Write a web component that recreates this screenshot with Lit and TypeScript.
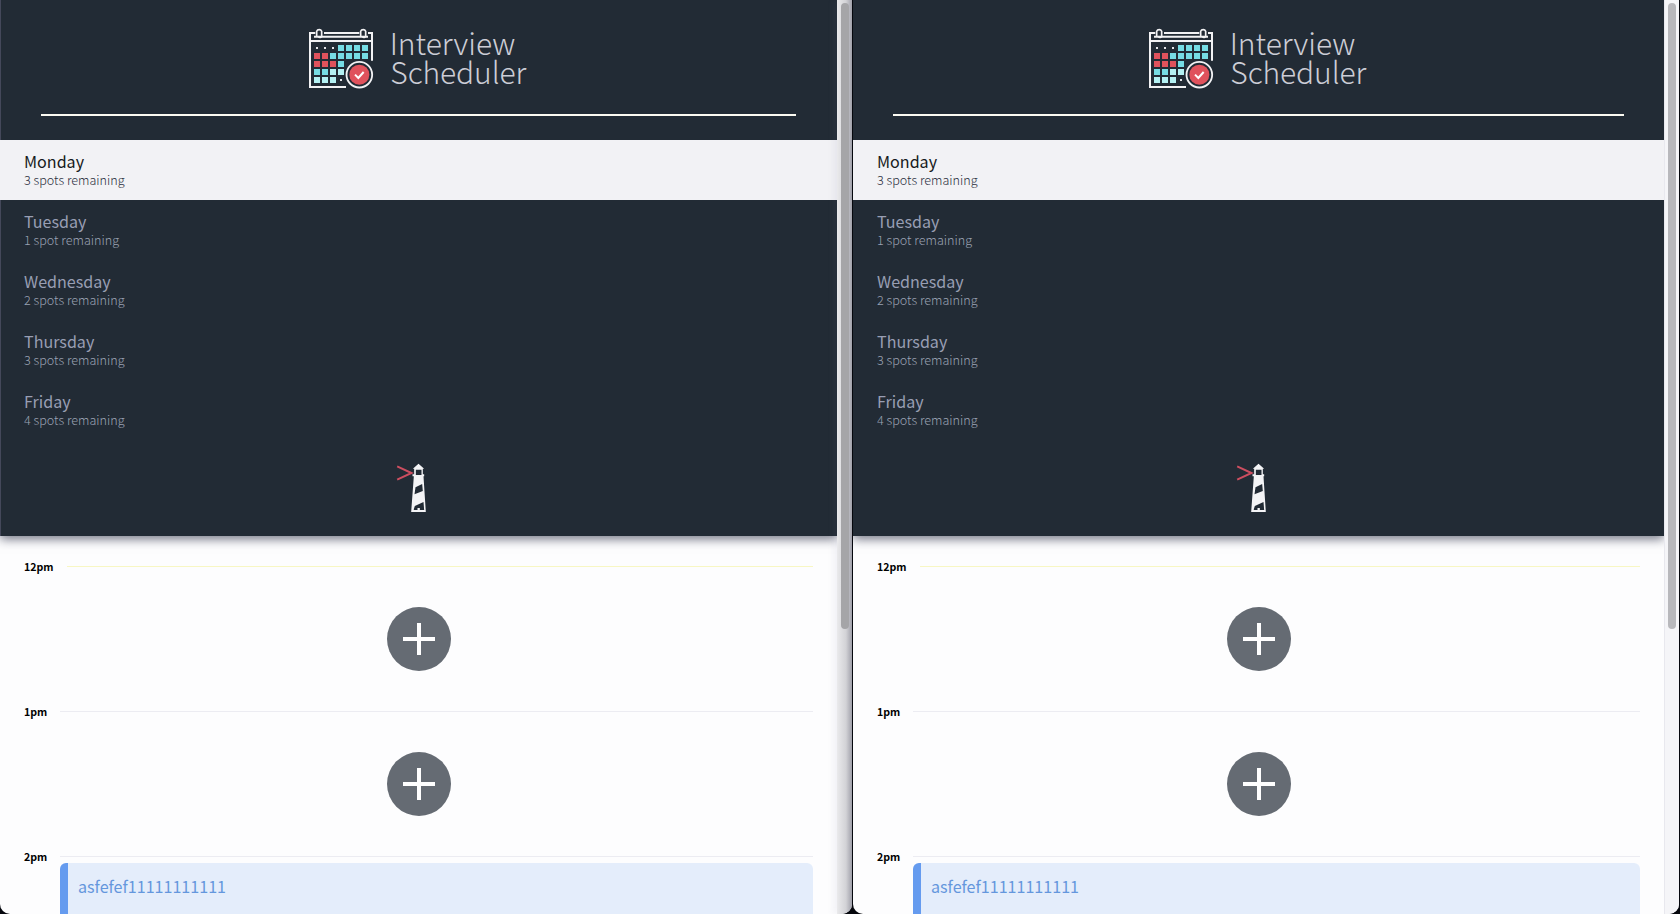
import { LitElement, html, css, svg } from "lit";
import { customElement, property } from "lit/decorators.js";

const DAYS = [
  ["Monday", "3 spots remaining"],
  ["Tuesday", "1 spot remaining"],
  ["Wednesday", "2 spots remaining"],
  ["Thursday", "3 spots remaining"],
  ["Friday", "4 spots remaining"],
];

// Calendar cells, one string per row: d = dot, r = red, c = cyan, p = pale, . = empty
const CELLS = ["dddcccc", "rrccccc", "rrrc...", "ccpp...", "pppd..."];
const FILLS: Record<string, string> = { r: "#e0525c", c: "#76dce4", p: "#b4f1f3" };

const cell = (kind: string, col: number, row: number) => {
  const x = 72 + col * 24;
  const y = 105 + row * 24;
  if (kind === ".") return null;
  if (kind === "d") return svg`<rect x=${x + 6} y=${y + 6} width="6" height="6" fill="#e4e4e8"/>`;
  return svg`<rect x=${x} y=${y} width="18" height="18" fill=${FILLS[kind]}/>`;
};

@customElement("scheduler-logo")
class SchedulerLogo extends LitElement {
  static styles = css`
    :host { display: block; height: 62px; }
    svg { display: block; overflow: visible; }
    .word { font-family: "Noto Sans CJK SC", sans-serif; font-weight: 300; font-size: 90px; fill: #cccdd6; }
  `;
  render() {
    return html`<svg width="218" height="62" viewBox="60 51 654 186">
      <g fill="none" stroke="#f2f2f4" stroke-width="6">
        <path d="M76 69H60V231H168M102 69H208M234 69H246V152M60 93H246M72 80H234"/>
        <path d="M80 78V64a8 8 0 0 1 15 0V76a5 5 0 0 1-10 2M212 78V64a8 8 0 0 1 15 0V76a5 5 0 0 1-10 2" stroke-width="5"/>
      </g>
      ${CELLS.map((row, r) => [...row].map((k, c) => cell(k, c, r)))}
      <circle cx="208" cy="194" r="45" fill="#222b35"/>
      <circle cx="208" cy="194" r="38.5" fill="#222b35" stroke="#f2f2f4" stroke-width="5.5"/>
      <circle cx="208" cy="194" r="30" fill="#e0525c"/>
      <path d="M195 194L205 204L221 186" fill="none" stroke="#fff" stroke-width="6"/>
      <text class="word" x="299" y="136" textLength="377">Interview</text>
      <text class="word" x="301" y="223" textLength="408">Scheduler</text>
    </svg>`;
  }
}

@customElement("lighthouse-mark")
class LighthouseMark extends LitElement {
  static styles = css`
    :host { display: block; }
    svg { display: block; }
  `;
  render() {
    return html`<svg width="44" height="50" viewBox="70 66 132 150">
      <path d="M81 79L124 99L81 119" fill="none" stroke="#cc4e60" stroke-width="6"/>
      <path d="M145 71L162 86H158V103H162V109H160L167 216H123L131 109H127V103H132V86H128Z" fill="#f4f4f6"/>
      <path d="M137 89H154V105H137ZM136 142L156 132L158 153L133 163ZM131 207L134 198L160 186L162 210H149V204H142V210H131Z" fill="#222b35"/>
    </svg>`;
  }
}

@customElement("scheduler-window")
class SchedulerWindow extends LitElement {
  @property({ type: Boolean, reflect: true }) behind = false;

  static styles = css`
    :host {
      display: flex; box-sizing: border-box; height: 914px; overflow: hidden;
      border-radius: 0 0 10px 10px; background: #fdfdfe;
      font-family: "Noto Sans CJK SC", sans-serif;
    }
    .page { flex: 1; min-width: 0; display: flex; flex-direction: column; }
    .sidebar {
      flex: none; box-sizing: border-box; height: 536px; background: #222b35;
      display: flex; flex-direction: column; align-items: center;
      padding-top: 27px; box-shadow: 0 3px 10px rgba(20, 25, 50, 0.6);
    }
    :host([behind]) .sidebar { box-shadow: inset 1px 0 #44485a, 0 3px 10px rgba(20, 25, 50, 0.6); }
    .rule { width: 90.2%; height: 2px; margin: 25px 0 24px; background: #fbfaf2; }
    .days { align-self: stretch; margin: 0; padding: 0; list-style: none; }
    .day { box-sizing: border-box; height: 60px; padding: 11px 24px 0; color: #989eb3; }
    .day.selected { background: #f2f2f5; color: #171a21; }
    .name { font-size: 16.1px; line-height: 20px; }
    .spots { font-size: 12.6px; line-height: 17px; font-weight: 300; color: #9ba2b3; }
    .selected .spots { color: #2c3040; }
    lighthouse-mark { margin-top: 22px; transform: translateX(-3.5px); }
    .schedule { padding: 20px 24px 0; }
    .hour { height: 145px; }
    .head { display: flex; align-items: center; height: 21px; }
    .time { font-size: 10.6px; font-weight: 700; color: #000; line-height: 20px; padding-top: 1px; }
    .line { flex: 1; height: 1px; margin-left: 13px; background: #ececf2; }
    .hour:first-child .line { background: #f8f7c4; }
    .empty { display: flex; justify-content: center; padding-top: 30px; }
    .card {
      box-sizing: border-box; height: 110px; margin: -4px 0 0 36px; padding: 11px 10px;
      border-left: 8px solid #659bef; border-radius: 6px; background: #e4edfb;
      color: #6497dd; font-size: 16.1px; line-height: 24px;
    }
    .track {
      flex: none; width: 15px; box-sizing: border-box; padding: 3px 3px 0 4px; background: #f5f5f8;
      box-shadow: inset 1px 0 #e8e8ee;
    }
    :host([behind]) .track { background: linear-gradient(90deg, #eaeaec, #d2d2d6 60%, #a0a0aa); box-shadow: -4px 0 6px rgba(120, 120, 150, 0.08); }
    .thumb { height: 626px; border-radius: 4px; background: #b8b8bc; }
    :host([behind]) .thumb { background: #a5a5a8; }
  `;

  addButton() {
    return html`<div class="empty"><svg width="64" height="64" viewBox="0 0 64 64">
      <circle cx="32" cy="32" r="32" fill="#656b73"/>
      <path d="M32 16V48M16 32H48" stroke="#fff" stroke-width="4"/>
    </svg></div>`;
  }

  render() {
    return html`
      <div class="page">
        <div class="sidebar">
          <scheduler-logo></scheduler-logo>
          <div class="rule"></div>
          <ul class="days">
            ${DAYS.map(([name, spots], i) => html`<li class="day ${i === 0 ? "selected" : ""}">
              <div class="name">${name}</div><div class="spots">${spots}</div>
            </li>`)}
          </ul>
          <lighthouse-mark></lighthouse-mark>
        </div>
        <div class="schedule">
          ${["12pm", "1pm", "2pm"].map((t) => html`<div class="hour">
            <div class="head"><span class="time">${t}</span><span class="line"></span></div>
            ${t === "2pm" ? html`<div class="card">asfefef11111111111</div>` : this.addButton()}
          </div>`)}
        </div>
      </div>
      <div class="track"><div class="thumb"></div></div>
    `;
  }
}

@customElement("app-root")
class AppRoot extends LitElement {
  static styles = css`
    :host { display: grid; grid-template-columns: 852px 826px; column-gap: 1px; width: 1680px; height: 914px; overflow: hidden; background: #05070d; }
  `;
  render() {
    return html`<scheduler-window behind></scheduler-window><scheduler-window></scheduler-window>`;
  }
}
